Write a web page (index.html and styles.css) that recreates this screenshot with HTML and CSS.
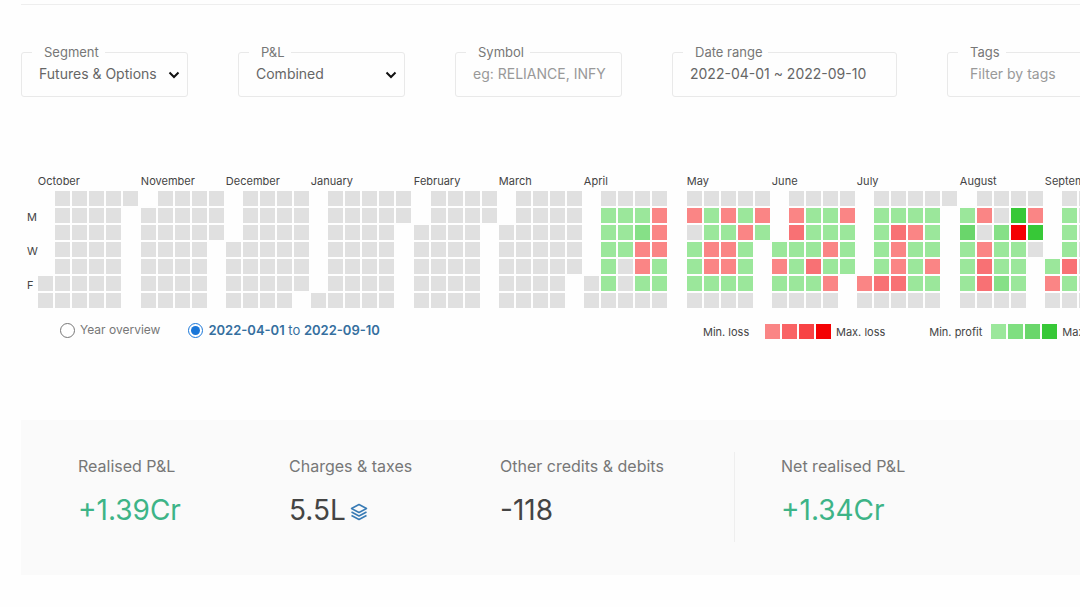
FILE: index.html
```html
<!DOCTYPE html>
<html lang="en">
<head>
<meta charset="utf-8">
<title>P&amp;L</title>
<link rel="stylesheet" href="styles.css">
</head>
<body>
<main class="page">
  <form class="filters">
    <fieldset class="field">
      <legend class="field-legend"><label for="segment">Segment</label></legend>
      <div class="field-body">
        <select class="control" id="segment"><option>Futures &amp; Options</option></select>
        <svg class="chevron" viewBox="0 0 12 8" aria-hidden="true"><path d="M1.5 1.5 6 6l4.500-4.500"/></svg>
      </div>
    </fieldset>
    <fieldset class="field">
      <legend class="field-legend"><label for="pnl">P&amp;L</label></legend>
      <div class="field-body">
        <select class="control" id="pnl"><option>Combined</option></select>
        <svg class="chevron" viewBox="0 0 12 8" aria-hidden="true"><path d="M1.5 1.5 6 6l4.500-4.500"/></svg>
      </div>
    </fieldset>
    <fieldset class="field">
      <legend class="field-legend"><label for="symbol">Symbol</label></legend>
      <div class="field-body"><input class="control" id="symbol" type="text" placeholder="eg: RELIANCE, INFY"></div>
    </fieldset>
    <fieldset class="field field-wide">
      <legend class="field-legend"><label for="range">Date range</label></legend>
      <div class="field-body"><input class="control" id="range" type="text" value="2022-04-01 ~ 2022-09-10"></div>
    </fieldset>
    <fieldset class="field field-wide">
      <legend class="field-legend"><label for="tags">Tags</label></legend>
      <div class="field-body field-body-tags"><input class="control" id="tags" type="text" placeholder="Filter by tags"></div>
    </fieldset>
  </form>

  <section class="heatmap">
    <div class="days"><span>M</span><span>W</span><span>F</span></div>
    <div class="months" id="months"></div>
  </section>

  <div class="heatmap-footer">
    <div class="views">
      <label class="view"><input class="radio" type="radio" name="view">Year overview</label>
      <label class="view view-active"><input class="radio" type="radio" name="view" checked><span><b>2022-04-01</b> to <b>2022-09-10</b></span></label>
    </div>
    <div class="scales">
      <div class="scale">
        <span class="scale-min">Min. loss</span>
        <span class="swatches"><i class="cell loss-1"></i><i class="cell loss-2"></i><i class="cell loss-3"></i><i class="cell loss-4"></i></span>
        <span>Max. loss</span>
      </div>
      <div class="scale">
        <span class="scale-min">Min. profit</span>
        <span class="swatches"><i class="cell profit-1"></i><i class="cell profit-2"></i><i class="cell profit-3"></i><i class="cell profit-4"></i></span>
        <span>Max. profit</span>
      </div>
    </div>
  </div>

  <section class="summary">
    <div class="stat"><div class="stat-label">Realised P&amp;L</div><div class="stat-value gain">+1.39Cr</div></div>
    <div class="stat">
      <div class="stat-label">Charges &amp; taxes</div>
      <div class="stat-value">5.5L
        <svg class="layers" viewBox="0 0 18 18" aria-hidden="true"><path d="M9 1.500 16.500 5.500 9 9.500 1.500 5.500zM1.500 9 9 13l7.500-4M1.500 12.500l7.500 4 7.500-4"/></svg>
      </div>
    </div>
    <div class="stat"><div class="stat-label">Other credits &amp; debits</div><div class="stat-value">-118</div></div>
    <div class="stat stat-net"><div class="stat-label">Net realised P&amp;L</div><div class="stat-value gain">+1.34Cr</div></div>
  </section>
</main>
<script src="script.js"></script>
</body>
</html>
```
FILE: styles.css
```css
* { box-sizing: border-box; }

body {
  margin: 0;
  overflow-x: hidden;
  background: #fefefe;
  color: #444;
  font-family: Inter, "Liberation Sans", sans-serif;
  font-size: 14px;
}

.page {
  margin: 4px 0 0 21px;
  padding-top: 39px;
  border-top: 1px solid #eee;
}

.filters {
  display: flex;
  gap: 50px;
}

.field {
  flex: 0 0 167px;
  min-width: 0;
  height: 53px;
  margin: 0;
  padding: 0;
  border: 1px solid #e9e9e9;
  border-radius: 3px;
}

.field-wide { flex-basis: 225px; }

.field-legend {
  margin-left: 10px;
  padding: 0 6px 0 12px;
  color: #777;
  font-size: 13px;
  line-height: 16px;
}

.field-body {
  display: flex;
  align-items: center;
  padding: 3px 7px 0 17px;
}

.field-body-tags { padding-left: 22px; }

.control {
  flex: 1;
  min-width: 0;
  height: 20px;
  padding: 0;
  border: 0;
  outline: 0;
  appearance: none;
  background: none;
  color: #666;
  font: inherit;
}

.control::placeholder { color: #999; }

.chevron {
  flex: none;
  width: 12px;
  height: 8px;
  margin-top: 4px;
  fill: none;
  stroke: #111;
  stroke-width: 2;
}

.heatmap {
  display: flex;
  padding: 76px 0 0 6px;
  font-size: 11px;
  line-height: 16px;
}

.days {
  display: flex;
  flex-direction: column;
  gap: 18px;
  width: 11px;
  padding-top: 36px;
}

.months { display: flex; gap: 2px; }
.month-long { padding-right: 1px; }

.month-name {
  height: 18px;
  white-space: nowrap;
}

.weeks {
  display: grid;
  grid-template-columns: repeat(5, 15px);
  grid-auto-rows: 15px;
  gap: 2px;
}

.month-long .weeks { grid-template-columns: repeat(6, 15px); }

.cell { width: 15px; height: 15px; }
.idle { background: #e0e0e0; }
.profit-1 { background: #9be79b; }
.profit-2 { background: #7fdf80; }
.profit-3 { background: #6ad66b; }
.profit-4 { background: #37c837; }
.loss-1 { background: #fa8585; }
.loss-2 { background: #f96365; }
.loss-3 { background: #f84345; }
.loss-4 { background: #f40204; }
.weeks .loss-2 { background: #f87174; }
.weeks .profit-2 { background: #86e087; }

.heatmap-footer {
  display: flex;
  padding: 12px 0 0 39px;
  white-space: nowrap;
}

.views {
  display: flex;
  flex: 0 0 643px;
  gap: 28px;
  color: #777;
  font-size: 13px;
  line-height: 20px;
}

.view {
  display: flex;
  align-items: center;
  gap: 5px;
  font-size: 12px;
}

.view-active {
  color: #356f9f;
  font-size: 13px;
}

.view b { font-weight: 600; }

.radio {
  width: 15px;
  height: 15px;
  margin: 0;
  accent-color: #1976d8;
}

.scales {
  display: flex;
  gap: 44px;
  padding-top: 3px;
  font-size: 11px;
}

.scale {
  display: flex;
  align-items: center;
  gap: 5px;
}

.scale-min { min-width: 57px; }
.swatches { display: flex; gap: 2px; }

.summary {
  display: flex;
  align-items: flex-start;
  min-height: 155px;
  margin-top: 80px;
  padding: 32px 0 0 57px;
  background: #fafafa;
}

.stat {
  flex: 0 0 211px;
  padding-top: 4px;
}

.stat-net {
  flex: 1;
  height: 90px;
  margin-left: 23px;
  padding-left: 46px;
  border-left: 1px solid #eee;
}

.stat-label {
  color: #777;
  font-size: 16px;
  line-height: 20px;
  white-space: nowrap;
}

.stat-value {
  display: flex;
  align-items: center;
  gap: 4px;
  margin-top: 16px;
  font-size: 28px;
  line-height: 36px;
}

.gain { color: #3db487; }

.layers {
  width: 18px;
  height: 18px;
  margin-top: 3px;
  fill: none;
  stroke: #387bb5;
  stroke-width: 1.5;
  stroke-linejoin: round;
}
```
FILE: script.js
```js
// One string per weekday, Sunday first; one character per week.
const months = [
  ["October", ".ggggg .gggg. .gggg. .gggg. .gggg. ggggg. ggggg."],
  ["November", ".gggg ggggg ggggg gggg. gggg. gggg. gggg."],
  ["December", ".gggg .gggg .gggg ggggg ggggg ggggg gggg."],
  ["January", ".ggggg .ggggg .gggg. .gggg. .gggg. .gggg. ggggg."],
  ["February", ".gggg .gggg gggg. gggg. gggg. gggg. gggg."],
  ["March", ".gggg .gggg ggggg ggggg ggggg gggg. gggg."],
  ["April", ".gggg. .aaar. .aabr. .aarr. .agra. gagaa. ggggg."],
  ["May", "ggggg rarar gaara arra. arra. aaaa. gggg."],
  ["June", ".gggg .raar .saaa aaara rasaa aaar. gggg."],
  ["July", ".ggggg .aaaa. .asra. .araa. .arar. rssaa. ggggg."],
  ["August", ".gggg argdr cgbud araag asaa. asba. gggg."],
  ["September", ".gggg .aggg .aggg .aggg asggg raggg gggg."]
];

const kinds = {
  g: "idle",
  a: "profit-1", b: "profit-2", c: "profit-3", d: "profit-4",
  r: "loss-1", s: "loss-2", t: "loss-3", u: "loss-4"
};

const container = document.getElementById("months");

for (const [name, data] of months) {
  const rows = data.split(" ");
  const month = document.createElement("div");
  month.className = rows[0].length > 5 ? "month month-long" : "month";

  const title = document.createElement("div");
  title.className = "month-name";
  title.textContent = name;

  const weeks = document.createElement("div");
  weeks.className = "weeks";
  for (const key of rows.join("")) {
    const cell = document.createElement("i");
    cell.className = kinds[key] ? "cell " + kinds[key] : "cell";
    weeks.append(cell);
  }

  month.append(title, weeks);
  container.append(month);
}
```
